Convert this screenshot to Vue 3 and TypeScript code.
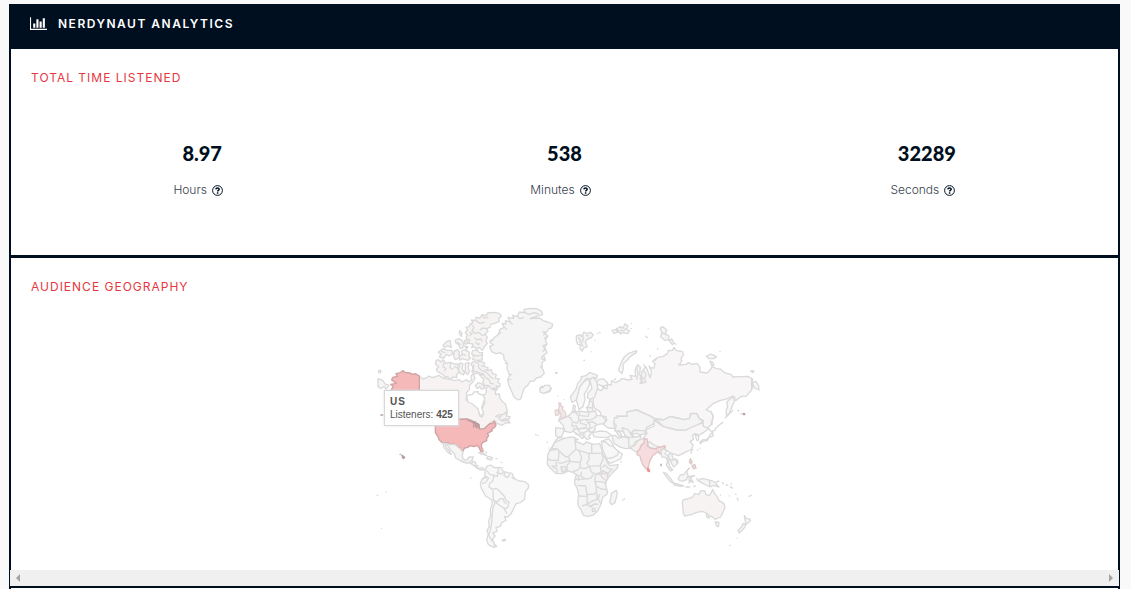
<script setup lang="ts">
interface Stat {
  value: string
  label: string
}

interface Shape {
  d: string
  tone?: string
}

interface Region {
  name: string
  transform: string
  shapes: Shape[]
}

const stats: Stat[] = [
  { value: '8.97', label: 'Hours' },
  { value: '538', label: 'Minutes' },
  { value: '32289', label: 'Seconds' },
]

const regions: Region[] = [
  {
    name: 'north-america',
    transform: 'translate(0 0)',
    shapes: [
      { d: 'M361 120L367 122 372 113 384 104 390 88 403 82 396 70 408 72 406 62 421 66 414 52 431 55 428 46 442 49 448 36 464 38 462 29 478 25 500 26 515 34 518 44 496 50 480 56 508 54 520 62 533 66 548 72 545 84 537 86 528 97 519 95 534 108 526 120 531 133 524 140 531 158 521 166 526 180 516 188 517 205 523 220 512 231 499 234 492 243 480 244 474 255 463 264 458 278 452 297 444 300 432 291 426 276 418 260 413 240 419 226 411 206 412 190 402 178 401 165 390 158 378 161 365 155 359 140 370 134 360 128Z' },
      { d: 'M386 103L394 97M404 82L411 90M421 66L428 74M442 49L450 56 462 52M464 38L478 43 492 38 506 42M528 97L520 106M534 108L522 116M531 133L519 137 525 148 518 155M526 180L514 176 519 166M517 205L510 199M413 240L424 238M419 226L427 222M412 190L404 190', tone: 'line' },
      { d: 'M300 72L309 68 304 60 316 62 318 52 330 54 336 44 350 47 352 39 372 37 388 40 394 48 386 56 388 64 374 70 362 73 360 82 350 86 354 94 345 102 352 112 347 122 352 130 343 140 337 151 327 142 320 147 313 140 305 143 309 132 296 130 299 121 288 114 292 105 286 97 293 90 288 82 298 80Z', tone: 'warm' },
      { d: 'M304 73L312 82 306 92 316 101 326 97 336 106 346 104M313 113L322 120 333 116 337 125M318 62L330 70 344 66M336 44L342 54 356 52M297 96L306 100 300 108M316 126L324 134 330 130M350 86L338 84 330 90', tone: 'line' },
      { d: 'M308 152L320 150 327 157 338 158 336 174 337 180 320 181 308 178 311 168 305 162ZM308 165L322 168 336 164', tone: 'warm' },
      { d: 'M269 92L276 99 274 109 268 101ZM256 120L266 116 275 120 280 130 279 143 271 146 266 134 257 128ZM230 125L240 121 242 133 244 142 232 137 224 143 219 136ZM205 157L218 146 232 151 246 151 248 162 237 168 229 163 221 174 208 171 213 162ZM252 155L262 149 268 156 267 174 256 179 251 170ZM274 153L284 149 298 157 296 168 302 174 294 181 278 176 269 180 268 169 277 163ZM283 122L291 120 293 131 285 132ZM284 138L294 141 290 147ZM262 126L272 134M214 154L226 159M277 163L288 166', tone: 'warm' },
      { d: 'M198 182L204 179 214 186 219 179 228 190 241 187 254 192 265 192 263 203 268 216 259 224 261 233 249 231 241 240 233 230 225 231 219 223 202 215 199 208 206 201 197 193ZM222 188L219 200 228 206 222 214M243 190L240 203 250 208M262 204L252 200', tone: 'warm' },
      { d: 'M271 188L279 192 276 207 284 217 280 225 270 219 265 208ZM286 190L297 188 295 203 298 216 293 224 286 216ZM303 191L311 184 320 188 329 184 344 189 341 199 354 203 353 211 364 209 367 221 379 224 376 235 388 237 383 246 391 252 387 262 378 257 382 270 370 263 375 271 362 265 353 256 345 257 338 247 342 237 333 231 337 222 325 218 314 222 305 214 310 206Z', tone: 'warm' },
      { d: 'M312 193L309 213 322 215 330 226 339 220 345 231M325 190L326 203 336 212 350 217 360 229 370 238M345 231L356 238 362 250 372 252M341 199L332 197M353 211L344 208', tone: 'line' },
      { d: 'M148 228L158 237 171 233 176 228 188 233 207 226 219 234 239 238 253 242 268 239 276 246 290 239 296 246 305 240 303 227 309 221 315 234 309 246 299 255 298 269 289 278 290 290 288 300 299 304 315 314 325 328 329 345 335 352 341 342 336 327 345 307 340 288 349 278 348 263 359 258 365 267 377 270 376 283 388 282 390 295 399 306 406 312 412 332 401 345 388 344 377 349 388 351 393 360 400 354 397 363 413 360 420 369 407 368 397 376 380 370 372 361 361 369 351 379 337 387 329 388 325 372 315 364 290 357 200 357 148 282Z', tone: 'warm' },
      { d: 'M290 290L297 284 307 284 312 276 325 275 324 281 339 285 344 297 335 323 341 340 330 348 324 326 307 312 294 306Z', tone: 'water' },
      { d: 'M316 258L324 248 334 251 345 263 335 268 329 260 322 266Z', tone: 'warm' },
      { d: 'M387 354L397 344 412 337 409 348 420 350 416 359 405 356 394 362Z', tone: 'warm' },
      { d: 'M148 228L148 282 126 272 108 275 76 282 64 268 70 260 62 253 79 250 65 240 68 232 82 229 78 221 91 218 98 212 105 217 118 219 130 223 136 221Z', tone: 'us' },
      { d: 'M24 236L39 242 45 252 57 256 48 268 43 260 32 265 24 260Z' },
      { d: 'M509 267L517 258 523 264 533 256 544 265 540 274 526 279 516 275Z' },
      { d: 'M26 211h6v7h-6ZM557 217h4v3h-4Z' },
      { d: 'M31 345h9M34 343v3', tone: 'speck' },
    ],
  },
  {
    name: 'latin-america',
    transform: 'translate(0 360)',
    shapes: [
      { d: 'M196 -5L266 -2 292 -3 303 1 307 8 314 5 322 15 325 12 329 27 344 26 351 18 361 10 368 11 373 3 378 16 372 24 365 27 367 32 357 38 352 40 356 47 350 55 350 62 338 68 334 73 335 83 340 93 333 96 327 82 320 76 311 80 301 77 293 82 284 84 278 94 273 90 270 83 263 80 258 74 248 72 240 73 233 68 217 68 208 60 203 48 196 38Z', tone: 'us' },
      { d: 'M293 1L304 4 312 10 311 23M305 3L316 8 318 22M316 8L327 14 328 26M322 15L321 25', tone: 'lake' },
      { d: 'M219 69L225 70 229 82 235 89 244 103 239 101 229 92 222 82ZM228 69L240 74 249 73 258 75 265 83 270 85 274 92 280 95 276 106 280 118 290 121 297 111 310 111 305 123 317 127 316 138 325 145 337 143 344 149 331 150 318 142 300 129 289 129 272 123 257 114 253 102 243 91 236 81Z' },
      { d: 'M325 98L337 97 350 107 336 102ZM354 109L368 113 364 120 350 116ZM376 116L383 116M300 122v7M308 126L303 132M317 136L326 138M338 86l4 5M346 94l5 6M394 125v5M398 143h3M300 174h4' },
      { d: 'M345 150L351 139 361 135 374 143 391 142 400 154 414 158 426 160 433 176 447 183 465 185 476 194 475 204 466 215 464 237 451 248 438 251 430 268 423 281 413 291 403 289 408 301 396 307 391 319 378 323 381 334 368 339 375 348 367 358 373 372 380 379 371 382 355 374 350 358 355 342 351 332 358 319 356 303 362 287 361 268 367 249 365 240 347 228 334 205 331 190 337 177 345 170Z', tone: 'pale' },
      { d: 'M350 151L359 163 372 166 369 182 359 190 357 201 367 208 378 205 385 210 403 229 407 240 417 246 413 262 403 268 411 281M372 166L382 169 384 159 396 162 400 155M405 157L402 166 412 173 420 162M424 171L432 177M369 211L370 239 375 248 369 263 366 289 365 309 361 330 356 345 367 365M370 240L382 246 390 236 400 237 403 248 411 249M378 248L387 255 404 266M335 180L349 170 356 174 347 187 336 191M342 172L350 173M371 367L374 379M382 142L386 151 380 159', tone: 'line' },
      { d: 'M397 360l9-2 0 4-8 1ZM20 226h5M46 216h3M33 325h3M495 44h5M502 47h4M532 67v2' },
      { d: 'M89 102l3 2M94 105l4 2 6 5-4 4-4-6', tone: 'hawaii' },
    ],
  },
  {
    name: 'northern-eurasia',
    transform: 'translate(510 0)',
    shapes: [
      { d: 'M109 108L121 104 124 110 132 96 141 101 152 97 160 105 152 114 142 117 136 126 142 140 133 143 126 153 120 146 122 135 113 133 109 122ZM114 112L122 120 118 128M128 104L130 118 124 130 130 140M138 106L146 108M216 91L228 88 234 96 222 100ZM230 86L242 80 249 85 255 71 264 78 260 87 269 94 262 101 247 97 242 102ZM240 90L252 92 258 84M360 85L369 80 380 90 376 102 386 107 387 119 374 121 362 110 366 98ZM366 98L378 104M388 123L395 117 403 130 397 134ZM499 169L512 162 522 166 530 171 521 176 507 176ZM510 183L519 188 522 196 514 195Z' },
      { d: 'M238 202L244 187 252 172 266 160 290 152 289 158 270 170 262 180 249 192 250 205 246 221 236 211Z', tone: 'russia' },
      { d: 'M162 271L171 265 181 272 191 266 184 257 167 251 176 239 190 236 203 249 200 256 188 258 200 267 204 253 213 255 215 242 226 248 239 242 246 235 264 240 276 238 270 226 287 229 285 210 293 194 301 202 299 222 306 240 300 251 318 246 305 229 306 215 317 200 323 212 330 233 335 217 329 204 342 204 345 191 338 184 353 172 368 170 382 161 385 151 397 152 402 142 408 151 428 155 430 166 423 175 425 184 416 195 437 193 446 188 456 193 472 190 480 202 480 216 501 219 512 208 516 200 529 206 541 207 554 218 574 224 578 231 599 230 624 229 638 237 636 248 648 244 656 258 657 270 642 263 638 250 635 270 618 289 604 289 587 302 578 288 560 297 539 302 519 311 498 329 513 336 520 349 512 375 498 388 488 380 490 362 478 355 470 340 452 340 449 356 432 359 411 353 390 350 372 359 347 357 326 345 313 340 291 329 264 336 262 348 232 350 229 363 222 363 222 376 228 386 204 384 188 371 200 362 199 351 185 348 179 334 164 325 159 309Z', tone: 'russia' },
      { d: 'M635 235V271M290 201L294 222 290 240M299 234L309 247M311 193L316 201M326 197L332 203M311 212L318 224 314 236M222 240L228 236M344 182L350 178', tone: 'line' },
      { d: 'M573 294L584 291 582 307 575 323 567 341 560 348 558 332 563 320 560 307Z', tone: 'russia' },
      { d: 'M91 291L99 280 109 265 113 251 123 239 123 231 139 226 148 218 162 222 172 226 170 236 160 232 149 238 139 235 129 249 119 262 116 277 109 300 96 307Z' },
      { d: 'M119 262L130 247 144 236 150 250 143 266 133 283 135 298 129 320 117 328 112 310 109 301Z', tone: 'pale' },
      { d: 'M149 239L161 232 171 247 173 264 164 291 151 299 142 293 144 279 156 266Z' },
      { d: 'M149 301L158 307 158 324 143 322 147 312ZM139 322L157 324 161 335 145 336ZM101 315L106 318 104 330 108 333 101 340 98 329Z' },
      { d: 'M56 309L63 310 61 318 69 319 67 328 76 337 78 349 65 355 58 354 64 347 59 335 55 327 58 320ZM45 331L54 330 57 344 47 347Z', tone: 'uk' },
      { d: 'M71 355L82 349 91 343 96 336 108 337 119 333 132 336 146 336 166 333 171 347 184 347 198 359 192 370 176 373 163 379 166 388 156 398 145 390 137 402 127 397 120 407 108 403 102 390 92 398 75 394 69 376 55 360Z' },
      { d: 'M80 349L91 353 98 366 112 369 117 359 115 348 107 337M117 336L120 347 145 349 147 336M117 361L136 358 150 360 166 353 170 346M95 369L96 379 109 377 114 387 132 384 147 387 160 381M123 360L121 370 139 374 137 384M139 360L144 369 157 365 170 373M148 369L150 385', tone: 'line' },
      { d: 'M0 262L9 263 14 256 28 256 33 267 25 274 10 280 0 276ZM130 181h5M45 218h7M176 98h6M315 109h4M318 112h6M323 86h3M351 147h4M330 165v5M538 154h4M632 213h10l-3 5ZM71 299h3M52 287h3M152 155h3M272 71h4M271 86h4M170 101h4M163 121h4M406 132h4' },
      { d: 'M224 352L232 354 231 348 262 349 260 336 289 330 314 341 327 346 347 358 342 370 320 383 316 394 282 390 267 405 243 393 224 393 229 377 221 368ZM347 357L370 360 389 350 411 354 432 359 448 356 453 341 470 341 478 356 489 364 470 379 449 385 436 392 410 390 371 381Z', tone: 'gray' },
      { d: 'M592 331l6 2M602 342h4', tone: 'line' },
      { d: 'M609 341h5v3h-3Z', tone: 'hawaii' },
    ],
  },
  {
    name: 'southern-eurasia-africa',
    transform: 'translate(510 330)',
    shapes: [
      { d: 'M47 53L71 56 72 62 65 80 53 82 47 76Z' },
      { d: 'M102 55L114 58 122 73 133 78 127 86 116 75 101 65ZM104 85L115 88 107 91ZM133 67L147 61 153 72 146 78 151 85 140 88 131 76ZM158 68L180 63 199 65 214 75 204 82 180 82 162 80Z', tone: 'pale' },
      { d: 'M47 91L58 82 73 85 92 81 105 82 105 94 121 99 130 104 139 96 161 103 179 101 186 119 187 132 196 145 203 160 210 167 235 164 231 175 216 190 202 206 196 222 201 239 202 251 188 262 183 282 179 291 173 303 160 315 143 319 130 316 123 299 115 288 113 274 116 254 112 236 104 221 105 207 109 193 98 187 85 183 68 191 49 191 31 175 22 162 23 136 28 122 39 107Z', tone: 'gray' },
      { d: 'M44 97L64 89 77 84M44 97L34 116 51 116 77 141 85 139 108 118 105 94M28 122L51 118M57 120L55 151 32 151 23 145M108 118L119 122 147 131 155 129 155 102M155 130H187M147 131L147 149 140 160 148 169 180 167 189 149 187 132M85 139L91 154 81 166 82 184M91 154L121 157 125 143 117 122M121 157L120 173 109 182 97 185M120 173L134 176 148 169 154 186 168 193 183 186 181 167M125 185L121 197 136 207 152 205 160 193M105 207L121 208 133 207M112 226L137 228 141 254 164 252 170 245 168 228 165 214 166 195M168 193H185L188 182 204 190 203 209M166 214L185 215 199 221M169 229L184 237 201 239M142 255L141 283 154 275 171 268 171 250M115 258L141 259M126 288L141 283 149 289 163 282 175 283M144 284L152 291 167 280M180 252L174 267 183 282M157 295h8v9h-8ZM187 172L195 165 205 175 217 178 204 190M48 155L50 169 34 168M53 157L65 160 78 155 88 151M62 171L67 187M73 169L76 185M38 172L50 176 52 190M184 186L190 191M107 195L116 198 116 213', tone: 'line' },
      { d: 'M183 192L190 190 201 191 203 206 198 212 185 202Z', tone: 'blush' },
      { d: 'M64 170L76 170 78 182 68 186Z', tone: 'blush' },
      { d: 'M214 250L229 241 232 251 225 278 215 284 209 276 212 265ZM246 270h4M251 267h4' },
      { d: 'M184 94L205 86 213 93 222 112 231 121 247 132 242 146 221 156 207 160 199 144 188 119Z', tone: 'pale' },
      { d: 'M187 96L196 95 209 107 222 110M201 145L216 144 232 136 236 126M215 78L225 76 235 85 252 80 266 85 271 100 268 115 257 116 239 111 223 101ZM229 65L238 64 246 78 237 79ZM246 53L264 59 273 73 282 79 270 84 255 77Z', tone: 'gray' },
      { d: 'M266 83L285 81 303 78 300 90 286 95 280 107 267 114ZM282 61L315 62 316 71 299 75 291 70 273 74Z', tone: 'gray' },
      { d: 'M268 113L285 106 294 92 307 87 319 87 313 98 303 107 297 123 287 126 278 119Z', tone: 'blush' },
      { d: 'M317 60L342 48 342 30 370 50 410 60 437 61 450 54 488 38 490 49 507 55 490 68 473 78 466 71 457 76 461 88 450 95 460 105 452 120 433 128 416 137 400 132 387 126 374 116 350 110 324 97 310 84 321 70Z', tone: 'russia' },
      { d: 'M319 99L327 95 344 106 356 111 350 117 329 112Z', tone: 'gray' },
      { d: 'M312 86L321 87 324 103 321 108 333 115 350 117 352 112 363 111 374 107 376 112 366 119 366 129 359 132 355 124 350 128 338 137 329 154 327 164 323 179 317 176 309 165 302 148 300 138 291 134 293 123 300 117 303 106 313 99Z', tone: 'india' },
      { d: 'M323 174L329 181 328 185 323 183Z', tone: 'sri' },
      { d: 'M362 124L370 116 380 121 375 132 387 138 382 151 377 142 366 141ZM383 138L388 130 396 133 399 147 412 150 414 160 401 171 390 151ZM384 150L390 171 398 180 392 183 379 165Z' },
      { d: 'M404 144L412 160M390 148L401 152M370 187L380 191 394 208 401 220 391 215 380 201ZM400 219L420 224 431 228 422 229 403 225ZM415 204L421 195 432 193 439 184 444 195 440 209 428 213 418 212ZM447 199L464 197 451 203 460 218 451 212 448 219ZM436 231L451 231M459 230L468 227M470 204l2 7M473 213h7M477 208L488 206 500 208 514 212 523 216 537 231 520 226 510 231 491 222 479 215ZM509 211V230M528 216L538 213M546 217l5 5M557 224l8 3M570 230l8 5M585 253h5M591 263l4 9M626 260l9-5M573 220l2 4' },
      { d: 'M451 146L456 155 454 162 448 156ZM456 168L464 163 468 175 460 176ZM439 185L449 173', tone: 'blush-dark' },
      { d: 'M363 161v8', tone: 'hawaii' },
      { d: 'M466 72L475 75 476 89 472 92 467 81ZM478 98L488 89 500 89 505 83 519 78 518 67 509 76 503 91 489 94 480 102M504 54L515 65 528 59M512 2L519 17 515 47M524 58L544 40 550 37M555 25L579 0M458 116L452 132M471 120h4M479 115h3', tone: 'line' },
      { d: 'M427 277L429 270 446 265 458 261 464 251 477 253 482 242 495 243 497 253 508 257 515 246 518 238 524 251 532 260 536 271 551 280 555 292 549 306 542 321 525 328 513 318 503 323 499 309 487 304 470 307 456 313 434 318 430 310Z', tone: 'warm' },
      { d: 'M499 310L506 314 507 324 500 320ZM526 336L537 337 535 350 529 347Z' },
      { d: 'M613 317L620 326 629 327 631 333 619 343 616 335ZM610 340L617 344 612 355 598 369 594 362 604 351ZM590 385h3M568 406h5M540 255h3M566 257l3 1M240 155h5M20 97h4M24 114h2' },
    ],
  },
]
</script>

<template>
  <main class="page">
    <article class="panel">
      <header class="panel-header">
        <svg class="chart-icon" viewBox="0 0 2048 1792" aria-hidden="true">
          <path d="M640 896v512H384V896zm384-512v1024H768V384zm1024 1152v128H0V128h128v1408zm-640-896v768h-256V640zm384-384v1152h-256V256z" />
        </svg>
        <h1>NERDYNAUT ANALYTICS</h1>
      </header>

      <section class="time">
        <h2>TOTAL TIME LISTENED</h2>
        <dl class="stats">
          <div v-for="stat in stats" :key="stat.label" class="stat">
            <dd>{{ stat.value }}</dd>
            <dt>
              <span>{{ stat.label }}</span>
              <button class="help" type="button" :aria-label="`About ${stat.label}`">
                <svg viewBox="0 0 11 11" aria-hidden="true">
                  <circle cx="5.5" cy="5.5" r="4.9" />
                  <path d="M3.8 4.4C4 2.5 7.2 2.6 7.2 4.3C7.2 5.3 5.6 5.3 5.6 6.5M5.6 7.3V8.7" />
                </svg>
              </button>
            </dt>
          </div>
        </dl>
      </section>

      <section class="geography">
        <h2>AUDIENCE GEOGRAPHY</h2>
        <div class="map">
          <svg viewBox="0 0 1167 750" role="img" aria-label="Listeners by country">
            <g v-for="region in regions" :key="region.name" :transform="region.transform">
              <path
                v-for="(shape, index) in region.shapes"
                :key="index"
                :d="shape.d"
                :class="['land', shape.tone]"
              />
            </g>
          </svg>
          <div class="tooltip" role="tooltip">
            <strong>US</strong>
            <p>Listeners: <b>425</b></p>
          </div>
        </div>
        <div class="scrollbar">
          <button type="button" class="arrow left" aria-label="Scroll left"></button>
          <button type="button" class="arrow right" aria-label="Scroll right"></button>
        </div>
      </section>
    </article>
  </main>
</template>

<style>
body {
  margin: 0;
  background: #f9f9f9;
}
</style>

<style scoped>
.page {
  box-sizing: border-box;
  display: flex;
  min-height: 100vh;
  padding: 4px 11px 0 9px;
  background: #f9f9f9;
  color: #000f20;
  font-family: Inter, "Liberation Sans", sans-serif;
}

.panel {
  flex: 1;
  min-width: 0;
  border: solid #000f20;
  border-width: 0 2px;
  background: #fff;
}

.panel-header {
  display: flex;
  align-items: center;
  gap: 11px;
  box-sizing: border-box;
  height: 45px;
  padding: 0 19px 6px;
  background: #000f20;
  color: #fff;
}

.chart-icon {
  width: 17px;
  height: 15px;
  fill: currentColor;
}

h1,
h2 {
  margin: 0;
  font-size: 12px;
  line-height: 16px;
}

h1 {
  font-weight: 600;
  letter-spacing: 1.5px;
}

h2 {
  padding: 21px 20px 0;
  color: #e53740;
  font-weight: 400;
  letter-spacing: 1px;
}

.time {
  box-sizing: border-box;
  min-height: 209px;
  border-bottom: 3px solid #000f20;
}

.stats {
  display: grid;
  grid-template-columns: repeat(3, 1fr);
  margin: 0;
  padding: 54px 10px 0;
  text-align: center;
}

.stat {
  display: flex;
  flex-direction: column;
  gap: 16px;
}

.stat dd {
  margin: 0;
  font-family: Lato, "Liberation Sans", sans-serif;
  font-size: 20px;
  font-weight: 900;
  line-height: 26px;
}

.stat dt {
  display: flex;
  align-items: center;
  justify-content: center;
  gap: 5px;
  padding-right: 8px;
  font-size: 12px;
  font-weight: 300;
  line-height: 16px;
}

.stat dt span {
  color: #36404c;
}

.help {
  display: flex;
  padding: 0;
  border: 0;
  background: none;
  color: inherit;
}

.help svg {
  width: 11px;
  height: 11px;
  fill: none;
  stroke: currentColor;
}

.help path {
  stroke-width: 1.5;
}

.geography {
  border-bottom: 2px solid #000f20;
}

.map {
  position: relative;
  width: 389px;
  margin: 5px auto 0;
}

.map svg {
  display: block;
  width: 100%;
  height: 250px;
  overflow: visible;
}

.land {
  fill: #f5f5f5;
  stroke: #dadada;
  stroke-width: 4;
  stroke-linejoin: round;
}

.warm { fill: #f7f3f3; }
.russia { fill: #f8f6f7; }
.pale { fill: #f8f8f8; }
.gray { fill: #f4f4f4; }
.blush { fill: #f8eeee; }
.blush-dark { fill: #eddcdc; stroke: #dcc9c9; }
.uk { fill: #f5e8e8; stroke: #e2d4d4; }
.water { fill: #fff; }
.line { fill: none; }
.us { fill: #f5b9ba; stroke: #cfa2a3; }
.lake { fill: none; stroke: #b99a9b; }
.india { fill: #f7dcdd; stroke: #dfc4c5; }
.sri { fill: #ef9a9a; stroke: #ec9696; }
.hawaii { fill: #b7a0a1; stroke: #b7a0a1; }
.speck { fill: none; stroke: #b7a0a1; }

.tooltip {
  position: absolute;
  top: 90px;
  left: 14px;
  box-sizing: border-box;
  padding: 4px 5px;
  border: 1px solid #d8d8d8;
  background: #fff;
  box-shadow: 0 0 2px #dddddd;
  color: #555;
  font-family: "Liberation Sans", Arial, sans-serif;
  font-size: 10px;
  line-height: 13px;
  white-space: nowrap;
}

.tooltip strong {
  display: block;
  letter-spacing: 1px;
}

.tooltip p {
  margin: 0;
}

.scrollbar {
  display: flex;
  align-items: center;
  justify-content: space-between;
  height: 16px;
  margin: 20px -1px 0;
  padding: 0 6px;
  background: #f0f0f0;
}

.arrow {
  width: 4px;
  height: 8px;
  padding: 0;
  border: 0;
  background: #a3a3a3;
}

.left { clip-path: polygon(100% 0, 100% 100%, 0 50%); }
.right { clip-path: polygon(0 0, 100% 50%, 0 100%); }
</style>
